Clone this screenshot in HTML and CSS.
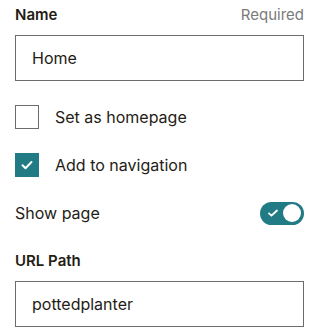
FILE: index.html
```html
<!DOCTYPE html>
<html lang="en">
<head>
  <meta charset="utf-8">
  <title>Page settings</title>
  <link rel="stylesheet" href="styles.css">
</head>
<body>
  <form class="page-form">
    <div class="field">
      <div class="field-head">
        <label class="field-title" for="name">Name</label>
        <span class="field-hint">Required</span>
      </div>
      <input class="input" id="name" type="text" value="Home">
    </div>

    <label class="checkbox-row">
      <input class="checkbox" type="checkbox">
      <span class="box"></span>
      <span class="checkbox-title">Set as homepage</span>
    </label>

    <label class="checkbox-row">
      <input class="checkbox" type="checkbox" checked>
      <span class="box">
        <svg viewBox="0 0 24 24" width="24" height="24"><path d="M7.5 12.2l3 3 6-6.2" fill="none" stroke="#fff" stroke-width="2" stroke-linecap="round" stroke-linejoin="round"/></svg>
      </span>
      <span class="checkbox-title">Add to navigation</span>
    </label>

    <label class="toggle-row">
      <span class="toggle-title">Show page</span>
      <span class="toggle">
        <svg class="toggle-check" viewBox="0 0 12 12" width="12" height="12"><path d="M2 6.3l2.5 2.4L10 3.5" fill="none" stroke="#fff" stroke-width="1.8" stroke-linecap="round" stroke-linejoin="round"/></svg>
        <span class="knob"></span>
      </span>
    </label>

    <div class="field">
      <div class="field-head">
        <label class="field-title" for="path">URL Path</label>
      </div>
      <input class="input" id="path" type="text" value="pottedplanter">
    </div>
  </form>
</body>
</html>
```

FILE: styles.css
```css
*, *::before, *::after {
  margin: 0;
  box-sizing: border-box;
}

body {
  padding: 3px 24px 0 15px;
  background-color: #FFFFFF;
  color: #241C15;
  font-family: "Inter", sans-serif;
  font-size: 16px;
  line-height: 24px;
}

.page-form {
  display: flex;
  flex-direction: column;
  gap: 24px;
  width: 289px;
}

.field {
  display: flex;
  flex-direction: column;
  gap: 8px;
}

.field-head {
  display: flex;
  justify-content: space-between;
  align-items: center;
}

.field-title {
  font-weight: 600;
  font-size: 15px;
}

.field-hint {
  color: #7A7A7A;
  font-size: 15px;
}

.input {
  height: 46px;
  padding: 0 16px;
  border: 1px solid #6E6B68;
  border-radius: 0;
  color: #241C15;
  font-family: inherit;
  font-size: 16px;
  outline: none;
}

.checkbox-row {
  display: flex;
  align-items: center;
  gap: 16px;
  cursor: pointer;
}

.checkbox {
  display: none;
}

.box {
  display: flex;
  width: 24px;
  height: 24px;
  border: 1px solid #6E6B68;
}

.box svg {
  margin: -1px;
}

.checkbox:checked + .box {
  border-color: #217B84;
  background-color: #217B84;
}

.toggle-row {
  display: flex;
  justify-content: space-between;
  align-items: center;
  height: 24px;
}

.toggle {
  display: flex;
  align-items: center;
  justify-content: space-between;
  width: 44px;
  height: 23px;
  padding: 0 3px 0 7px;
  border-radius: 12px;
  background-color: #217B84;
}

.knob {
  width: 18px;
  height: 18px;
  border-radius: 50%;
  background-color: #FFFFFF;
}
```
